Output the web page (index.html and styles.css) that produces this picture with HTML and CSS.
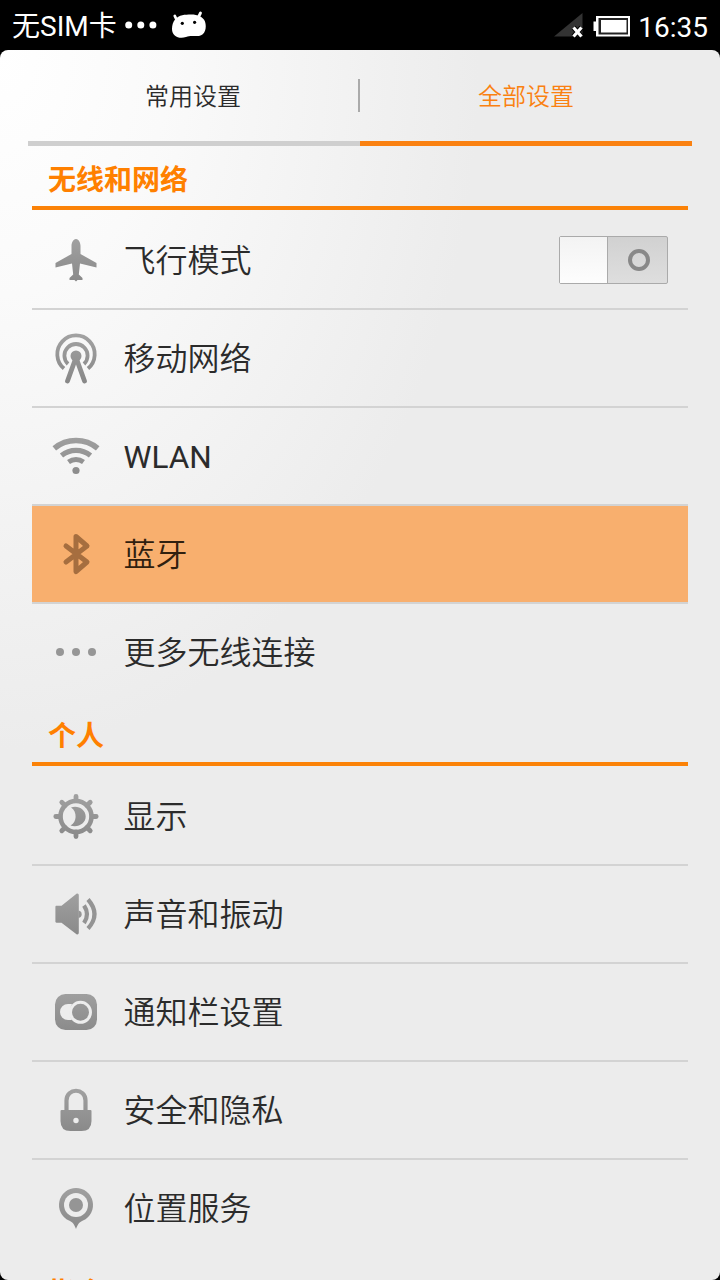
FILE: index.html
```html
<!DOCTYPE html>
<html lang="zh-CN">
<head>
<meta charset="utf-8">
<title>设置</title>
<link rel="stylesheet" href="styles.css">
</head>
<body>
<svg class="defs" width="0" height="0" aria-hidden="true">
  <defs>
    <linearGradient id="metal" gradientUnits="userSpaceOnUse" x1="0" y1="4" x2="0" y2="52">
      <stop offset="0" stop-color="#a2a2a2"/><stop offset="1" stop-color="#888888"/>
    </linearGradient>
  </defs>
</svg>
<header class="status">
  <span class="carrier">无SIM卡</span>
  <svg class="more" width="32" height="8" viewBox="0 0 32 8" fill="#fff"><circle cx="3.7" cy="4" r="3.5"/><circle cx="15.8" cy="4" r="3.5"/><circle cx="27.9" cy="4" r="3.5"/></svg>
  <svg class="robot" width="38" height="30" viewBox="0 0 38 30">
    <path d="M5 8.500 3.800 6M27.500 7 29.500 3" stroke="#fff" stroke-width="2.800" stroke-linecap="round"/>
    <path d="M4 9.500C8 5 14 4.600 20 4.600C27 4.600 32 7 34 11.500C36 18 34 25 28 26C23 26.500 20 25 15 27C8 29.500 1 26 1 19C1 15 2 12 4 9.500Z" fill="#fff"/>
    <circle cx="11.300" cy="13.300" r="1.600"/><circle cx="23.600" cy="12.300" r="1.600"/>
  </svg>
  <div class="indicators">
    <svg width="32" height="28" viewBox="0 0 32 28"><path d="M1 25.500 29.500 2V25.500Z" fill="#333"/><path d="M20.500 16.500 28.500 25.500M28.500 16.500 20.500 25.500" stroke="#000" stroke-width="5"/><path d="M20.500 16.500 28.500 25.500M28.500 16.500 20.500 25.500" stroke="#fff" stroke-width="3.200"/></svg>
    <svg class="battery" width="38" height="24" viewBox="0 0 38 24"><path d="M0.500 7.500H3V2H37V22.500H3V17H0.500Z" fill="#fff"/><rect x="5.500" y="4" width="29.500" height="16.500" fill="#222"/><rect x="8" y="6" width="25.500" height="12.500" fill="#fff"/></svg>
    <span class="clock">16:35</span>
  </div>
</header>
<main class="panel">
  <nav class="tabs">
    <a class="tab">常用设置</a>
    <a class="tab tab-active">全部设置</a>
  </nav>
  <section class="group">
    <h2>无线和网络</h2>
    <div class="row">
      <svg class="icon" viewBox="0 0 56 56"><path d="M28 7C31 7 32.500 11 32.500 14V22L48.500 31V35.500L32 31.500 30.800 42.500 34.500 46V48H29.500L28 49.500 26.500 48H21.500V46L25.200 42.500 24 31.500 7.500 35.500V31L23.500 22V14C23.500 11 25 7 28 7Z" fill="url(#metal)"/></svg>
      <span class="label">飞行模式</span>
      <div class="switch"><i class="knob"></i><i class="off"></i></div>
    </div>
    <div class="row">
      <svg class="icon" viewBox="0 0 56 56" fill="none" stroke="url(#metal)" stroke-linecap="round"><path d="M16 38.500A18.700 18.700 0 1 1 40 38.500" stroke-width="3.800" stroke-linecap="butt"/><path d="M20 34A11.600 11.600 0 1 1 36 34" stroke-width="3.800" stroke-linecap="butt"/><circle cx="28" cy="26" r="5.500" fill="url(#metal)" stroke="none"/><path d="M28 27.500 19.500 51M28 27.500 36.500 51" stroke-width="4.800"/></svg>
      <span class="label">移动网络</span>
    </div>
    <div class="row">
      <svg class="icon" viewBox="0 0 56 56" fill="none" stroke="url(#metal)"><path d="M6.300 20.300A34 34 0 0 1 49.700 20.300" stroke-width="5.600"/><path d="M13.500 27.500A23 23 0 0 1 42.500 27.500" stroke-width="5.200"/><path d="M20.500 34A13 13 0 0 1 35.500 34" stroke-width="5"/><circle cx="28" cy="42.500" r="3.600" fill="url(#metal)" stroke="none"/></svg>
      <span class="label label-latin">WLAN</span>
    </div>
    <div class="row row-pressed">
      <svg class="icon" viewBox="0 0 56 56" fill="none" stroke="#a66e3f" stroke-width="5" stroke-linecap="round" stroke-linejoin="round"><path d="M18 20 39 36 28 45.500V10.500L39 20 18 36"/></svg>
      <span class="label">蓝牙</span>
    </div>
    <div class="row">
      <svg class="icon" viewBox="0 0 56 56" fill="#969696"><circle cx="12" cy="28" r="4"/><circle cx="28" cy="28" r="4"/><circle cx="44" cy="28" r="4"/></svg>
      <span class="label">更多无线连接</span>
    </div>
  </section>
  <section class="group">
    <h2>个人</h2>
    <div class="row">
      <svg class="icon" viewBox="0 0 56 56" fill="none" stroke="url(#metal)"><circle cx="28" cy="28.500" r="15.500" stroke-width="4.600"/><path d="M28.010 8.300 28 12M28.010 44 28 48.500M7.800 28.510 12 28.500M44 28.510 48.200 28.500M13.800 14.300 17 17.500M39 39.500 42.200 42.700M42.200 14.300 39 17.500M17 39.500 13.800 42.700" stroke-width="4.800" stroke-linecap="round"/><path d="M23 19.500C30 17 37.700 21.500 37.700 28.500S30 40 22.500 37.500C29 34.500 29.500 23.500 23 19.500Z" fill="url(#metal)" stroke="none"/></svg>
      <span class="label">显示</span>
    </div>
    <div class="row">
      <svg class="icon" viewBox="0 0 56 56" fill="url(#metal)"><path d="M8.500 19.800H13.500L28.500 7.800C29.800 7.200 30.800 8 30.800 9.500V46.500C30.800 48 29.800 49 28.500 48.200L13.500 36.700H8.500C7.800 36.700 7.400 36.300 7.400 35.600V20.900C7.400 20.200 7.800 19.800 8.500 19.800Z"/><path d="M30.500 24.500A3.800 3.800 0 0 1 30.500 32Z"/><path d="M36 19.500Q42 28.300 36 37M40 13.500Q53 28.300 40 42.500" fill="none" stroke="#949494" stroke-width="4.200"/></svg>
      <span class="label">声音和振动</span>
    </div>
    <div class="row">
      <svg class="icon" viewBox="0 0 56 56"><rect x="7" y="10" width="42" height="36" rx="10.500" fill="url(#metal)"/><path d="M22 20H20A8 8 0 0 0 20 36H24Q19.500 28 24 20Z" fill="#ededed"/><circle cx="32.500" cy="28.300" r="10" fill="url(#metal)" stroke="#ededed" stroke-width="3"/></svg>
      <span class="label">通知栏设置</span>
    </div>
    <div class="row">
      <svg class="icon" viewBox="0 0 56 56"><path d="M18.500 30V18.500C18.500 5.500 37.500 5.500 37.500 18.500V30" fill="none" stroke="url(#metal)" stroke-width="4.200"/><path d="M13.500 28H42.500Q43.500 28 43.500 29V39Q43.500 49 33.500 49H22.500Q12.500 49 12.500 39V29Q12.500 28 13.500 28Z" fill="url(#metal)"/><circle cx="28" cy="38.500" r="2.700" fill="#ededed"/></svg>
      <span class="label">安全和隐私</span>
    </div>
    <div class="row">
      <svg class="icon" viewBox="0 0 56 56"><path d="M28 8A17 17 0 0 0 21 40.500C25 42 26.500 45 28 49C29.500 45 31 42 35 40.500A17 17 0 0 0 28 8Z" fill="url(#metal)"/><circle cx="28" cy="25" r="12" fill="#ededed"/><circle cx="28" cy="25" r="7" fill="#959595"/></svg>
      <span class="label">位置服务</span>
    </div>
  </section>
  <section class="group">
    <h2>指令</h2>
  </section>
</main>
</body>
</html>
```
FILE: styles.css
```css
* { box-sizing: border-box; }
body {
  margin: 0;
  width: 720px;
  height: 1280px;
  overflow: hidden;
  background: #000;
  font-family: Roboto, "Noto Sans CJK SC", sans-serif;
  color: #2b2b2b;
}
.defs { display: block; }
.status {
  height: 50px;
  padding: 0 12px;
  display: flex;
  align-items: center;
  color: #fff;
}
.carrier { font-size: 28px; line-height: 50px; padding-top: 3px; }
.more { margin-left: 8px; }
.robot { margin-left: 14px; }
.indicators { margin-left: auto; display: flex; align-items: center; }
.battery { margin: 2px 7px 0 8px; }
.clock { font-size: 28px; line-height: 50px; padding-top: 5px; }
.panel {
  height: 1230px;
  overflow: hidden;
  border-radius: 8px;
  background: radial-gradient(ellipse 480px 700px at 0 0, #ffffff 0%, #fafafa 35%, #ececec 100%);
}
.tabs {
  display: grid;
  grid-template-columns: 332px 332px;
  margin: 0 28px;
  height: 96px;
}
.tab {
  height: 96px;
  padding-right: 2px;
  text-align: center;
  font-size: 24px;
  font-weight: 350;
  line-height: 95px;
  border-bottom: 5px solid #cfcfcf;
  background: linear-gradient(#aaa, #aaa) right 0 top 29px / 2px 33px no-repeat;
}
.tab-active { padding-right: 0; color: #fa8111; border-color: #fa8111; background: none; }
.group { margin: 0 32px; padding-bottom: 8px; }
.group h2 {
  margin: 0 0 2px;
  height: 64px;
  padding: 12px 16px 0;
  border-bottom: 4px solid #fb8207;
  font-size: 28px;
  line-height: 46px;
  font-weight: 600;
  color: #ff8000;
}
.group + .group h2 { height: 56px; padding-top: 4px; }
.group + .group:last-child h2 { padding-top: 5px; }
.row {
  display: flex;
  align-items: center;
  height: 98px;
  padding: 0 20px 0 15.5px;
  border-bottom: 2px solid #d3d3d3;
  font-size: 32px;
  font-weight: 350;
}
.row:last-child { border-color: transparent; }
.row-pressed { background: #f8af6e; color: #30200f; }
.icon { width: 56px; height: 56px; margin-right: 20px; }
.label { padding-bottom: 4px; }
.label-latin { padding: 2px 0 0; font-size: 31.5px; font-weight: 400; }
.switch {
  display: flex;
  width: 109px;
  height: 48px;
  margin-left: auto;
  border: 1px solid #aaa;
  border-radius: 2px;
  background: linear-gradient(#d1d1d1, #dedede);
}
.knob { width: 48px; border-right: 1px solid #aaa; background: linear-gradient(#f3f3f3, #fdfdfd); }
.off {
  width: 22px;
  height: 22px;
  margin: 12px 0 0 20px;
  border: 4px solid #888;
  border-radius: 50%;
}
```
